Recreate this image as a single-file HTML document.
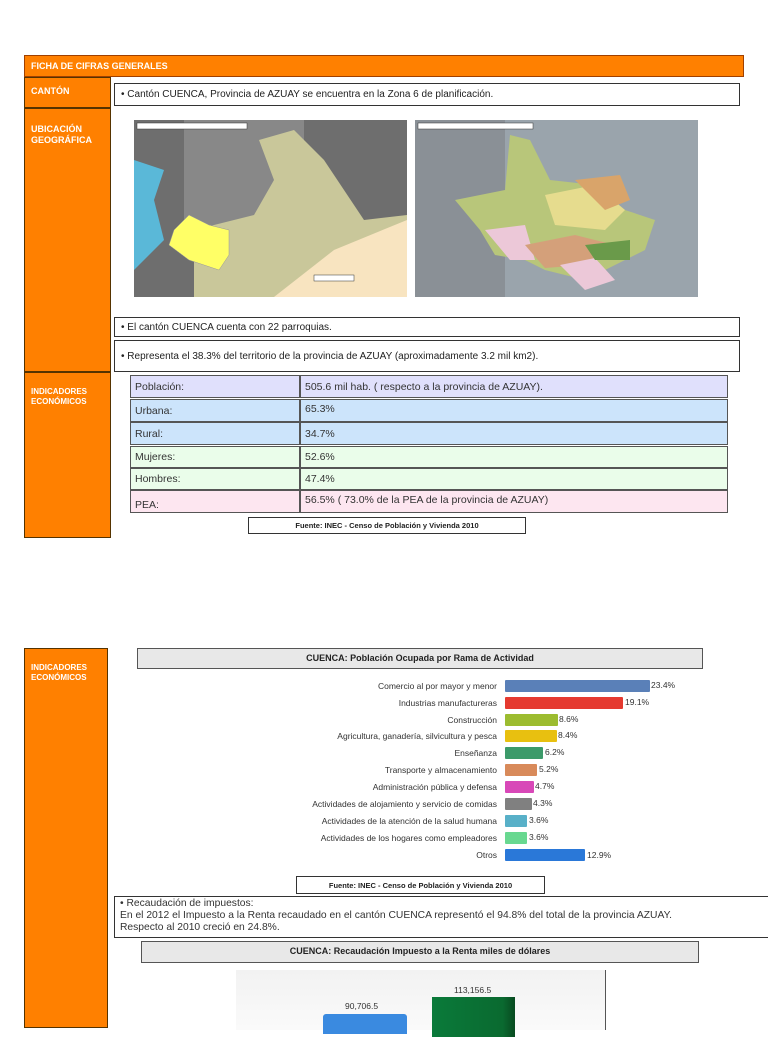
<!DOCTYPE html>
<html><head><meta charset="utf-8"><style>
*{margin:0;padding:0;box-sizing:border-box}
body{width:768px;height:1024px;background:#fff;position:relative;overflow:hidden;font-family:"Liberation Sans",sans-serif;color:#222}
.a{position:absolute}
.or{background:#FF8000;color:#fff;font-weight:bold;font-size:9px;line-height:11px}
.bx{border:1px solid #333;background:#fff;font-size:10px;padding:0 6px;display:flex;align-items:center}
.row{position:absolute;left:130px;width:598px;height:23px;font-size:10.5px;color:#333}
.row div{position:absolute;top:0;height:100%;border:1px solid #555;padding:0 4px;display:flex;align-items:center}
.lab{position:absolute;width:300px;left:0;text-align:right;font-size:8.5px;color:#333}
.bar{position:absolute;left:505px;height:12px;border-radius:1px}
.pct{position:absolute;font-size:8.5px;color:#333}
.title{border:1px solid #555;background:#e8e8e8;font-weight:bold;font-size:9px;text-align:center;line-height:19px}
</style></head><body>
<div class="a or" style="left:24px;top:55px;width:720px;height:22px;border:1px solid #a04000;padding:5px 6px">FICHA DE CIFRAS GENERALES</div>
<div class="a or" style="left:24px;top:77px;width:87px;height:461px;border:1px solid #553300"></div>
<div class="a or" style="left:24px;top:77px;width:87px;height:31px;border:1px solid #553300;padding:8px 6px">CANTÓN</div>
<div class="a or" style="left:24px;top:108px;width:87px;height:264px;border:1px solid #553300;padding:15px 6px">UBICACIÓN<br>GEOGRÁFICA</div>
<div class="a or" style="left:24px;top:372px;width:87px;height:166px;border:1px solid #553300;padding:14px 6px;font-size:8px;line-height:10px">INDICADORES<br>ECONÓMICOS</div>

<div class="a bx" style="left:114px;top:83px;width:626px;height:23px">• Cantón CUENCA, Provincia de AZUAY se encuentra en la Zona 6 de planificación.</div>

<svg class="a" style="left:134px;top:120px" width="273" height="177" viewBox="0 0 273 177">
<rect width="273" height="177" fill="#6e6e6e"/>
<rect x="50" y="0" width="120" height="120" fill="#888"/>
<path d="M0 40 L30 50 L20 80 L30 120 L0 150Z" fill="#5ab8d8"/>
<path d="M60 110 L120 95 L140 60 L125 20 L160 10 L190 40 L230 100 L273 95 L273 177 L60 177 Z" fill="#c9c79a"/>
<path d="M140 177 L200 130 L273 100 L273 177Z" fill="#f8e4c0"/>
<path d="M40 110 L55 95 L75 105 L95 110 L95 135 L85 150 L55 140 L35 125Z" fill="#ffff66" stroke="#999" stroke-width=".5"/>
<rect x="3" y="3" width="110" height="6" fill="#fff" stroke="#333" stroke-width=".5"/>
<rect x="180" y="155" width="40" height="6" fill="#fff" stroke="#333" stroke-width=".5"/>
</svg>
<svg class="a" style="left:415px;top:120px" width="283" height="177" viewBox="0 0 283 177">
<rect width="283" height="177" fill="#9aa4ac"/>
<rect x="0" y="0" width="90" height="177" fill="#8a9096"/>
<path d="M40 80 L90 70 L95 15 L115 20 L135 60 L180 65 L210 90 L240 100 L230 130 L200 145 L170 160 L130 150 L110 140 L80 135 L65 110 L40 80Z" fill="#b8c67a"/>
<path d="M130 75 L180 65 L210 90 L190 110 L140 105Z" fill="#e6dc8e"/>
<path d="M70 110 L110 105 L120 140 L95 140Z" fill="#ecc8d8"/>
<path d="M110 125 L160 115 L200 125 L170 145 L130 148Z" fill="#d4a07a"/>
<path d="M145 145 L180 138 L200 160 L170 170Z" fill="#ecc8d8"/>
<path d="M160 60 L205 55 L215 80 L190 90Z" fill="#d9a46a"/>
<path d="M170 125 L215 120 L215 140 L180 140Z" fill="#6a9a4a"/>
<rect x="3" y="3" width="115" height="6" fill="#fff" stroke="#333" stroke-width=".5"/>
</svg>

<div class="a bx" style="left:114px;top:317px;width:626px;height:20px">• El cantón CUENCA cuenta con 22 parroquias.</div>
<div class="a bx" style="left:114px;top:340px;width:626px;height:32px">• Representa el 38.3% del territorio de la provincia de AZUAY (aproximadamente 3.2 mil km2).</div>

<div class="row" style="top:375px"><div style="left:0;width:170px;background:#e0e0fc">Población:</div><div style="left:170px;width:428px;background:#e0e0fc">505.6 mil hab. (  respecto a la provincia de AZUAY).</div></div>
<div class="row" style="top:399px"><div style="left:0;width:170px;background:#cce4fb">Urbana:</div><div style="left:170px;width:428px;background:#cce4fb;align-items:flex-start;padding-top:3px">65.3%</div></div>
<div class="row" style="top:422px"><div style="left:0;width:170px;background:#cce4fb">Rural:</div><div style="left:170px;width:428px;background:#cce4fb">34.7%</div></div>
<div class="row" style="top:446px;height:22px"><div style="left:0;width:170px;background:#eafdea">Mujeres:</div><div style="left:170px;width:428px;background:#eafdea">52.6%</div></div>
<div class="row" style="top:468px;height:22px"><div style="left:0;width:170px;background:#eafdea">Hombres:</div><div style="left:170px;width:428px;background:#eafdea">47.4%</div></div>
<div class="row" style="top:490px"><div style="left:0;width:170px;background:#fde6f0;padding-top:7px">PEA:</div><div style="left:170px;width:428px;background:#fde6f0;align-items:flex-start;padding-top:3px">56.5% ( 73.0% de la PEA de la provincia de AZUAY)</div></div>

<div class="a bx" style="left:248px;top:517px;width:278px;height:17px;justify-content:center;font-size:7.5px;font-weight:bold">Fuente: INEC -  Censo de Población y Vivienda  2010</div>

<div class="a or" style="left:24px;top:648px;width:84px;height:380px;border:1px solid #553300;padding:14px 6px;font-size:8px;line-height:10px">INDICADORES<br>ECONÓMICOS</div>
<div class="a title" style="left:137px;top:648px;width:566px;height:21px">CUENCA: Población Ocupada por Rama de Actividad</div>

<div class="lab" style="left:197px;top:681px">Comercio al por mayor y menor</div>
<div class="bar" style="top:680px;width:145px;background:#5a80b8"></div><div class="pct" style="left:651px;top:680px">23.4%</div>
<div class="lab" style="left:197px;top:698px">Industrias manufactureras</div>
<div class="bar" style="top:697px;width:118px;background:#e53a30"></div><div class="pct" style="left:625px;top:697px">19.1%</div>
<div class="lab" style="left:197px;top:715px">Construcción</div>
<div class="bar" style="top:714px;width:53px;background:#9cbc30"></div><div class="pct" style="left:559px;top:714px">8.6%</div>
<div class="lab" style="left:197px;top:731px">Agricultura, ganadería, silvicultura y pesca</div>
<div class="bar" style="top:730px;width:52px;background:#e8c010"></div><div class="pct" style="left:558px;top:730px">8.4%</div>
<div class="lab" style="left:197px;top:748px">Enseñanza</div>
<div class="bar" style="top:747px;width:38px;background:#3c9a6a"></div><div class="pct" style="left:545px;top:747px">6.2%</div>
<div class="lab" style="left:197px;top:765px">Transporte y almacenamiento</div>
<div class="bar" style="top:764px;width:32px;background:#d88a5a"></div><div class="pct" style="left:539px;top:764px">5.2%</div>
<div class="lab" style="left:197px;top:782px">Administración pública y defensa</div>
<div class="bar" style="top:781px;width:29px;background:#d848b8"></div><div class="pct" style="left:535px;top:781px">4.7%</div>
<div class="lab" style="left:197px;top:799px">Actividades de alojamiento y servicio de comidas</div>
<div class="bar" style="top:798px;width:27px;background:#808080"></div><div class="pct" style="left:533px;top:798px">4.3%</div>
<div class="lab" style="left:197px;top:816px">Actividades de la atención de la salud humana</div>
<div class="bar" style="top:815px;width:22px;background:#58b0c8"></div><div class="pct" style="left:529px;top:815px">3.6%</div>
<div class="lab" style="left:197px;top:833px">Actividades de los hogares como empleadores</div>
<div class="bar" style="top:832px;width:22px;background:#68d890"></div><div class="pct" style="left:529px;top:832px">3.6%</div>
<div class="lab" style="left:197px;top:850px">Otros</div>
<div class="bar" style="top:849px;width:80px;background:#2a78d8"></div><div class="pct" style="left:587px;top:850px">12.9%</div>

<div class="a bx" style="left:296px;top:876px;width:249px;height:18px;justify-content:center;font-size:7.5px;font-weight:bold">Fuente: INEC -  Censo de Población y Vivienda  2010</div>
<div class="a" style="left:114px;top:896px;width:660px;height:42px;border:1px solid #333;font-size:10.3px;line-height:12px;padding:1px 5px;color:#333">• Recaudación de impuestos:<br>En el 2012 el Impuesto a la Renta recaudado en el cantón CUENCA representó el 94.8% del total de la provincia AZUAY.<br>Respecto al 2010 creció en 24.8%.</div>
<div class="a title" style="left:141px;top:941px;width:558px;height:22px">CUENCA: Recaudación Impuesto a la Renta miles de dólares</div>

<div class="a" style="left:236px;top:970px;width:370px;height:60px;background:linear-gradient(#f2f2f2,#fafafa);border-right:1px solid #555"></div>
<div class="a" style="left:323px;top:1014px;width:84px;height:20px;background:#3a8ae0;border-radius:3px 3px 0 0"></div>
<div class="a" style="left:432px;top:997px;width:83px;height:40px;background:linear-gradient(90deg,#0a7a3a,#0a6a30 85%,#084a20)"></div>
<div class="a pct" style="left:345px;top:1001px">90,706.5</div>
<div class="a pct" style="left:454px;top:985px">113,156.5</div>
</body></html>
